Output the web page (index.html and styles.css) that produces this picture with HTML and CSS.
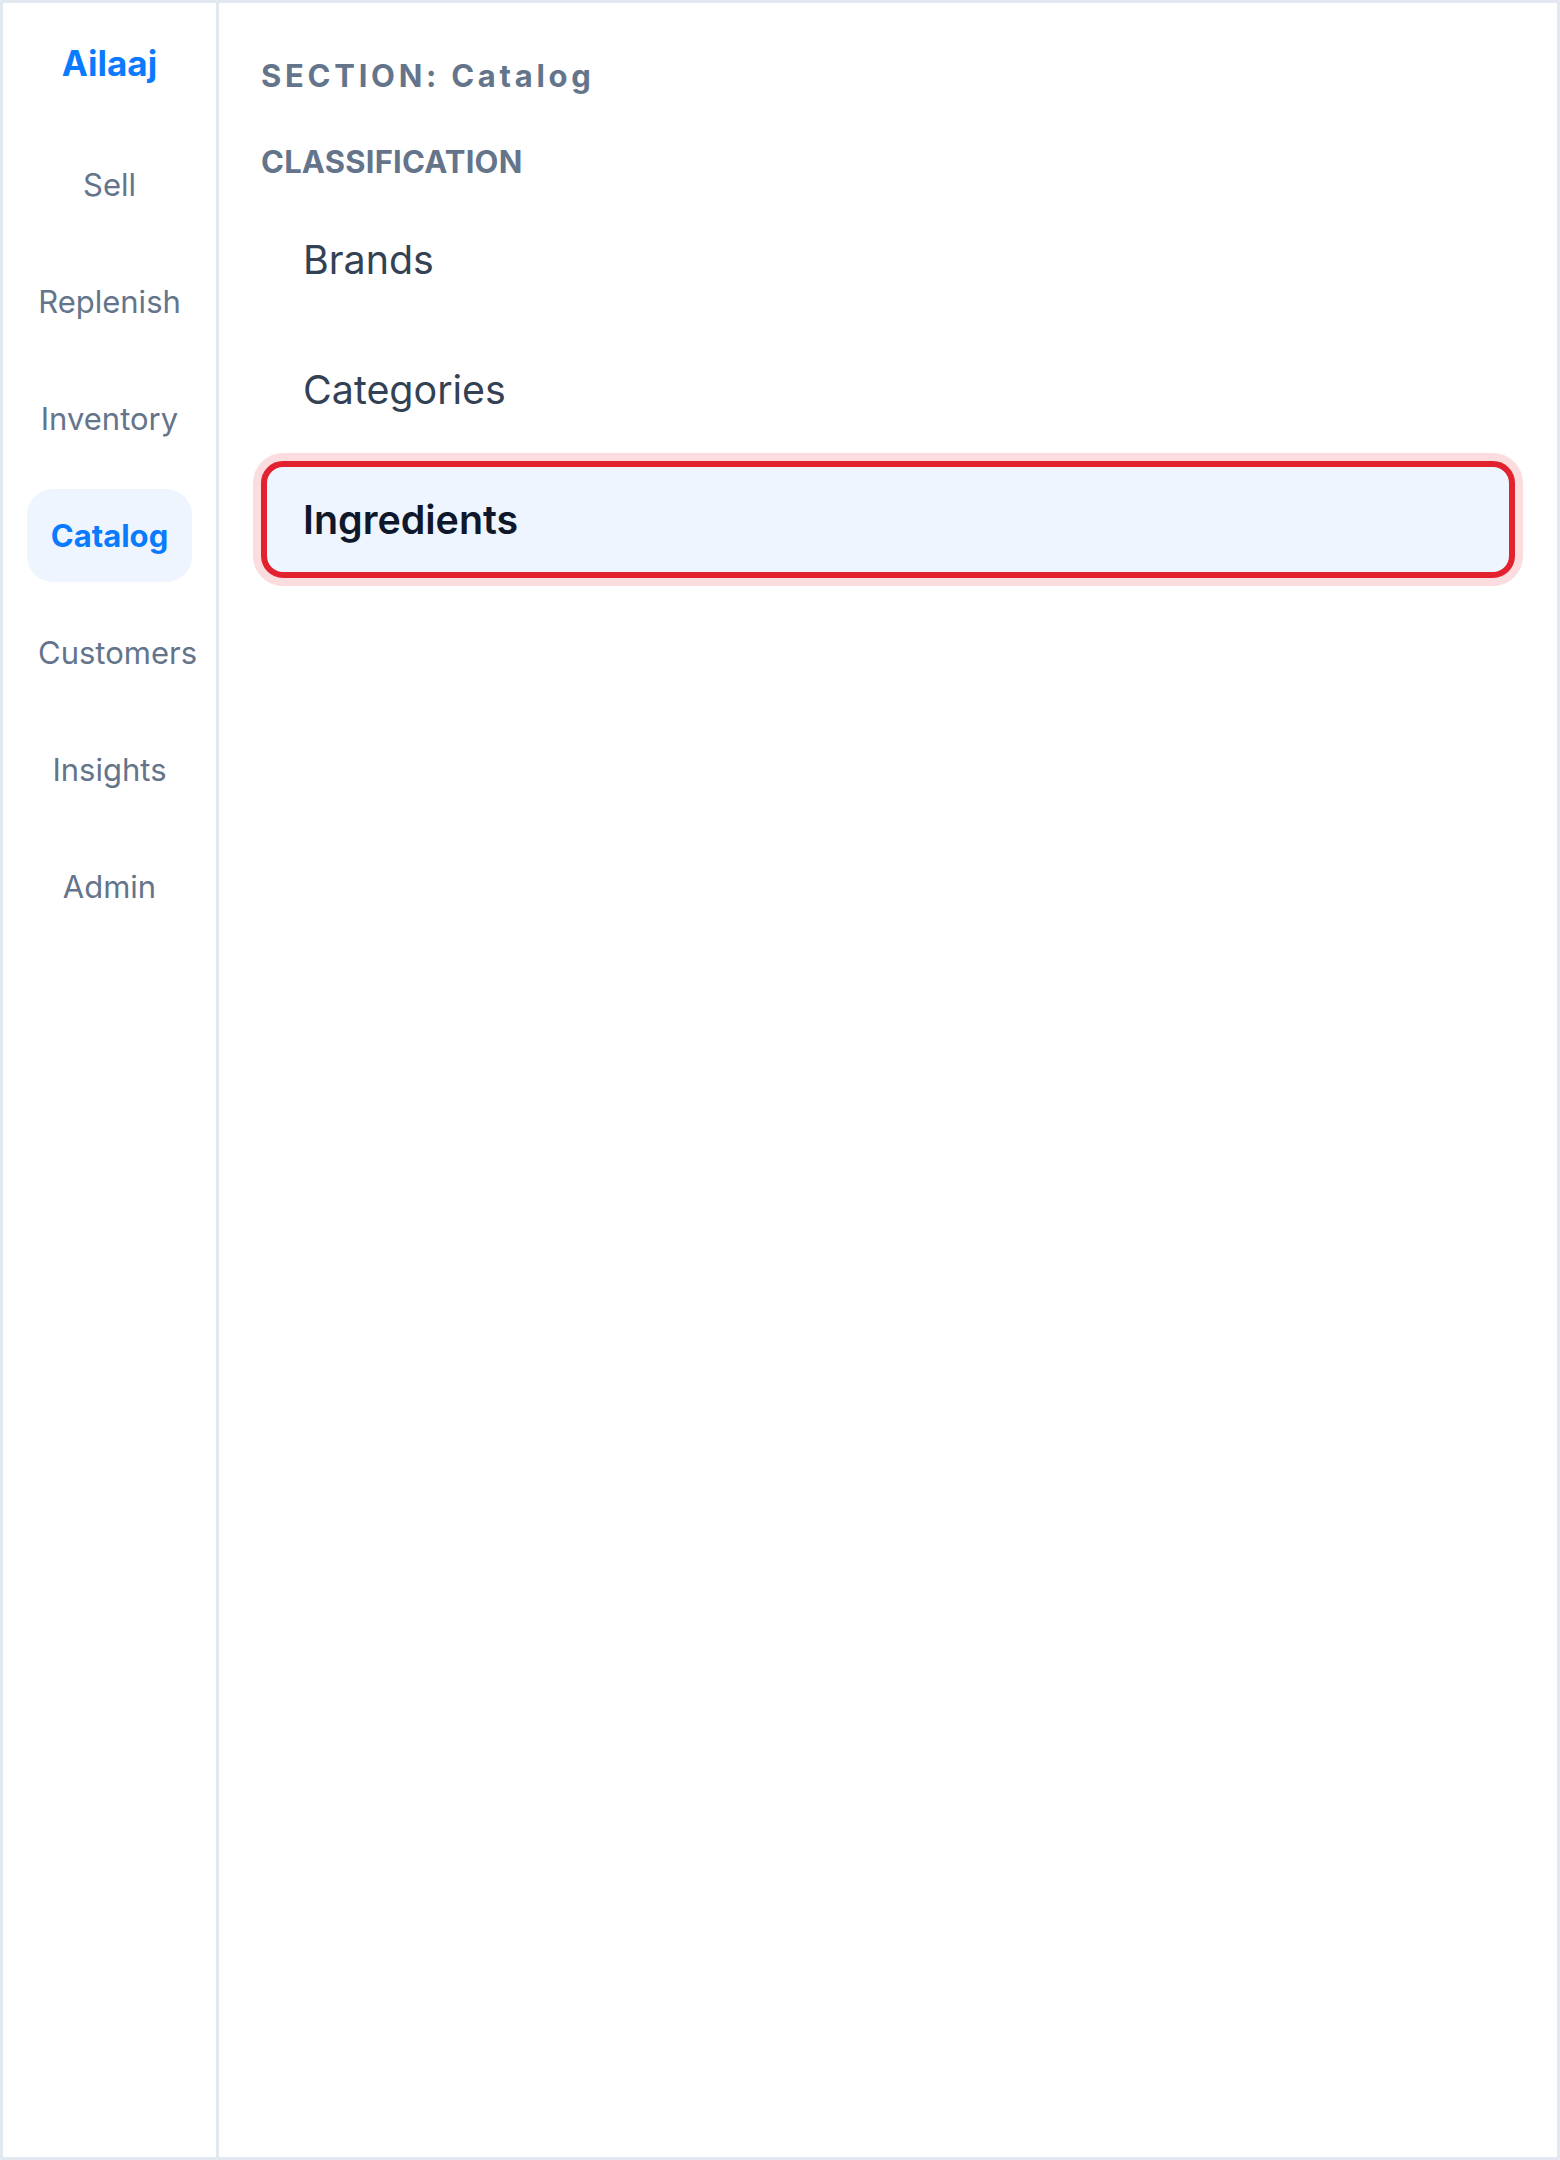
FILE: index.html
```html
<!DOCTYPE html>
<html lang="en">
<head>
<meta charset="utf-8">
<title>Ailaaj – Catalog</title>
<link rel="stylesheet" href="styles.css">
</head>
<body>
<div class="app">
  <aside class="sidebar">
    <div class="brand">Ailaaj</div>
    <nav class="nav">
      <div class="nav-item">Sell</div>
      <div class="nav-item">Replenish</div>
      <div class="nav-item">Inventory</div>
      <div class="nav-item active">Catalog</div>
      <div class="nav-item">Customers</div>
      <div class="nav-item">Insights</div>
      <div class="nav-item">Admin</div>
    </nav>
  </aside>
  <main class="main">
    <div class="section-title">SECTION: Catalog</div>
    <div class="group-title">CLASSIFICATION</div>
    <div class="list">
      <div class="list-item">Brands</div>
      <div class="list-item">Categories</div>
      <div class="list-item selected">Ingredients</div>
    </div>
  </main>
</div>
</body>
</html>
```
FILE: styles.css
```css
* { box-sizing: border-box; }
html, body { margin: 0; padding: 0; background: #ffffff; }
body { font-family: Inter, "Noto Sans", "Liberation Sans", sans-serif; }

.app {
  display: flex;
  width: 1560px;
  height: 2160px;
  border: 3px solid #e2e8f0;
}

.sidebar {
  width: 216px;
  flex: 0 0 216px;
  border-right: 3px solid #e2e8f0;
  padding: 39px 24px 0;
  display: flex;
  flex-direction: column;
}

.brand {
  height: 42px;
  line-height: 42px;
  font-size: 35px;
  font-weight: 700;
  color: #0a7aff;
  text-align: center;
  margin-bottom: 54px;
}

.nav {
  display: flex;
  flex-direction: column;
  gap: 24px;
}

.nav-item {
  height: 93px;
  padding: 0 11px;
  line-height: 93px;
  text-align: center;
  font-size: 31px;
  color: #64748b;
  white-space: nowrap;
  border-radius: 26px;
}

.nav-item.active {
  background: #eef5ff;
  color: #0a7aff;
  font-weight: 700;
}

.main {
  flex: 1;
  padding: 53px 42px 0;
}

.section-title {
  font-size: 31px;
  line-height: 40px;
  font-weight: 700;
  color: #64748b;
  letter-spacing: 0.12em;
}

.group-title {
  margin-top: 46px;
  font-size: 31px;
  line-height: 40px;
  font-weight: 700;
  color: #64748b;
  letter-spacing: 0.2px;
}

.list {
  margin-top: 19px;
  display: flex;
  flex-direction: column;
  gap: 13px;
}

.list-item {
  height: 117px;
  border: 6px solid transparent;
  border-radius: 22px;
  padding-left: 36px;
  display: flex;
  align-items: center;
  font-size: 39.4px;
  color: #334155;
}

.list-item.selected {
  border-color: #e3222f;
  background: #eef5fe;
  box-shadow: 0 0 0 8px #fbdde0;
  color: #0f172a;
  font-weight: 600;
}
```
